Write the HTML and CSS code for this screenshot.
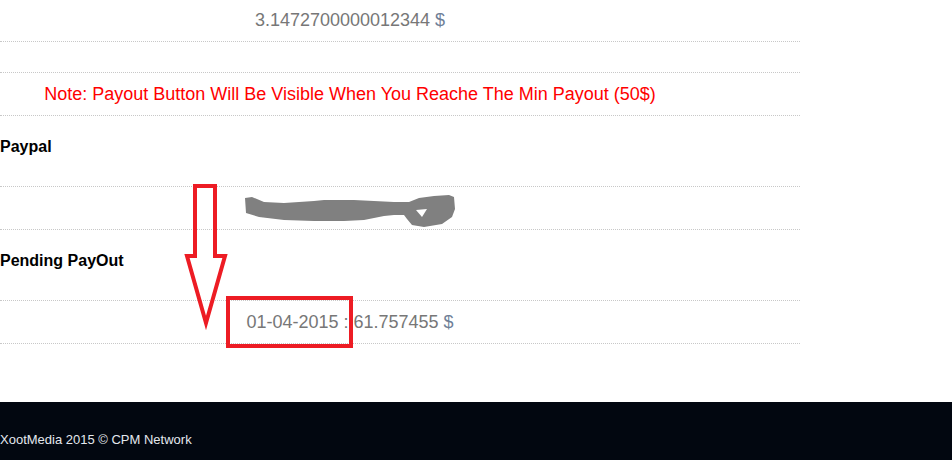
FILE: index.html
```html
<!DOCTYPE html>
<html lang="en">

<head>
    <meta charset="UTF-8">
    <meta name="viewport" content="width=device-width, initial-scale=1.0">
    <title>Payout</title>
    <link rel="stylesheet" href="styles.css">
</head>

<body>
    <div class="page">
        <div class="payout-table">
            <div class="row">
                <div class="cell">3.1472700000012344 <span class="cur">$</span></div>
            </div>
            <div class="row row-empty"></div>
            <div class="row">
                <div class="cell note">Note: Payout Button Will Be Visible When You Reache The Min Payout (50$)</div>
            </div>
            <h3 class="row-title">Paypal</h3>
            <div class="row">
                <div class="cell">
                    <!-- email hidden -->
                    <svg class="scribble" viewBox="0 0 212 42" width="212" height="42">
                        <path d="M1,11 L8,10 L20,15 L40,16 L70,14 L80,13 L110,13 L130,14 L150,15 L165,15 L175,11 L190,9 L205,8 L210,10 L211,22 L208,30 L198,37 L180,40 L168,38 L163,32 L160,28 L150,28 L140,29 L120,33 L100,34 L70,34 L40,33 L15,30 L2,26 Z" fill="#808080" />
                        <path d="M172,23 L183,22 L178,30 Z" fill="#fff" />
                    </svg>
                </div>
            </div>
            <h3 class="row-title">Pending PayOut</h3>
            <div class="row">
                <div class="cell">01-04-2015 : 61.757455 <span class="cur">$</span></div>
            </div>
        </div>
    </div>

    <svg class="marks" viewBox="0 0 952 400" width="952" height="400">
        <polygon points="195,186 215,186 215,256 225,256 206,323 187,256 195,256" fill="none" stroke="#ed1c24" stroke-width="4" />
        <rect x="228" y="298" width="123" height="48" fill="none" stroke="#ed1c24" stroke-width="4" />
    </svg>

    <footer class="footer">
        XootMedia 2015 &copy; CPM Network
    </footer>
</body>

</html>
```

FILE: styles.css
```css
body {
    margin: 0;
    font-family: "Liberation Sans", Arial, sans-serif;
    background: #fff;
    position: relative;
}

.page {
    padding-bottom: 58px;
}

.payout-table {
    width: 800px;
}

.row {
    border-bottom: 1px dotted #c8c8c8;
    padding: 11px 0;
}

.row:first-child {
    padding-top: 10px;
}

.row-empty {
    padding: 0;
    height: 30px;
}

.cell {
    width: 700px;
    text-align: center;
    font-size: 18px;
    line-height: 20px;
    color: #777;
}

.cur {
    color: #6f7f97;
}

.note {
    color: #ff0000;
}

.scribble {
    display: block;
    margin: -11px auto;
    overflow: visible;
}

.row-title {
    margin: 0;
    padding: 22px 0 30px;
    font-size: 16px;
    line-height: 18px;
    font-weight: bold;
    color: #000;
    border-bottom: 1px dotted #c8c8c8;
}

.marks {
    position: absolute;
    left: 0;
    top: 0;
    pointer-events: none;
}

.footer {
    background: #020710;
    color: #e4e8ee;
    font-size: 13px;
    line-height: 15px;
    padding: 30px 0 14px;
}
```
